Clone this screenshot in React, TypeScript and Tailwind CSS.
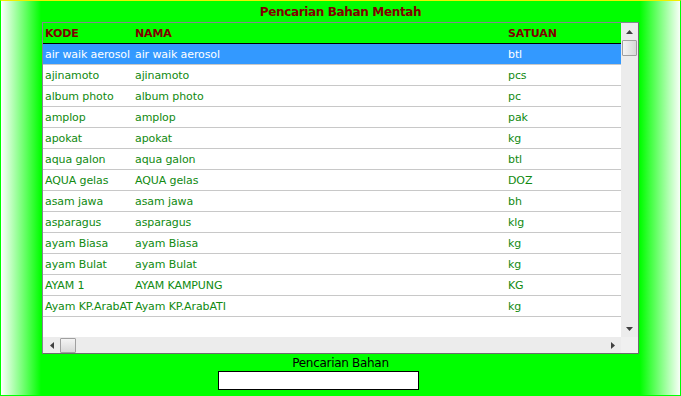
import React from "react";

const rows: [string, string, string][] = [
  ["air waik aerosol", "air waik aerosol", "btl"],
  ["ajinamoto", "ajinamoto", "pcs"],
  ["album photo", "album photo", "pc"],
  ["amplop", "amplop", "pak"],
  ["apokat", "apokat", "kg"],
  ["aqua galon", "aqua galon", "btl"],
  ["AQUA gelas", "AQUA gelas", "DOZ"],
  ["asam jawa", "asam jawa", "bh"],
  ["asparagus", "asparagus", "klg"],
  ["ayam Biasa", "ayam Biasa", "kg"],
  ["ayam Bulat", "ayam Bulat", "kg"],
  ["AYAM 1", "AYAM KAMPUNG", "KG"],
  ["Ayam KP.ArabATI", "Ayam KP.ArabATI", "kg"],
];

const font = { fontFamily: '"DejaVu Sans", Verdana, sans-serif' };

export default function App() {
  return (
    <div
      className="w-[681px] h-[396px] border-t border-[#f0f000] border-l border-r border-b border-l-[#00ff00] border-r-[#00ff00] border-b-[#00ff00] bg-[linear-gradient(to_right,#ffffff_0px,#00ff00_40px,#00ff00_639px,#ffffff_680px)] flex flex-col overflow-hidden"
      style={font}
    >
      <div className="h-[21px] flex items-center justify-center text-[12px] font-bold text-[#800000] leading-[20px] tracking-[-0.35px] pt-[1px]">
        Pencarian Bahan Mentah
      </div>
      <div className="pl-[41px]">
        <div className="w-[597px] h-[332px] border border-[#828790] border-r-[#6d6d6d] border-b-[#6d6d6d] bg-white flex flex-col">
          <div className="flex flex-1 min-h-0">
            <div className="flex-1 flex flex-col min-w-0">
              <div className="h-[21px] bg-[#00ff00] border-b border-black flex items-center text-[11px] font-bold text-[#800000] leading-[20px] tracking-[-0.1px] pt-[1px]">
                <div className="w-[90px] pl-[2px]">KODE</div>
                <div className="w-[373px] pl-[2px]">NAMA</div>
                <div className="flex-1 pl-[2px]">SATUAN</div>
              </div>
              {rows.map((r, i) => (
                <div
                  key={i}
                  className={`h-[21px] border-b border-[#c8c8c8] flex items-center text-[11px] leading-[20px] tracking-[-0.1px] whitespace-nowrap pt-[1px] ${
                    i === 0 ? "bg-[#3399ff] text-white" : "bg-white text-[#118a11]"
                  }`}
                >
                  <div className="w-[90px] pl-[2px] overflow-hidden">{r[0]}</div>
                  <div className="w-[373px] pl-[2px]">{r[1]}</div>
                  <div className="flex-1 pl-[2px]">{r[2]}</div>
                </div>
              ))}
            </div>
            <div className="w-[17px] bg-[#ececec] flex flex-col items-center">
              <div className="h-[17px] w-full flex items-center justify-center">
                <svg width="7" height="4" viewBox="0 0 7 4">
                  <path d="M3.5 0 L7 4 L0 4 Z" fill="#404040" />
                </svg>
              </div>
              <div className="w-[15px] h-[16px] border border-[#a0a0a0] rounded-[1px] bg-[linear-gradient(to_right,#f4f4f4,#d8d8d8)]" />
              <div className="flex-1" />
              <div className="h-[17px] w-full flex items-center justify-center">
                <svg width="7" height="4" viewBox="0 0 7 4">
                  <path d="M0 0 L7 0 L3.5 4 Z" fill="#404040" />
                </svg>
              </div>
            </div>
          </div>
          <div className="h-[16px] flex bg-[#ececec]">
            <div className="flex-1 flex items-center">
              <div className="w-[17px] h-full flex items-center justify-center">
                <svg width="4" height="7" viewBox="0 0 4 7">
                  <path d="M0 3.5 L4 0 L4 7 Z" fill="#404040" />
                </svg>
              </div>
              <div className="w-[16px] h-[15px] border border-[#a0a0a0] rounded-[1px] bg-[linear-gradient(to_bottom,#f4f4f4,#d8d8d8)]" />
              <div className="flex-1" />
              <div className="w-[17px] h-full flex items-center justify-center">
                <svg width="4" height="7" viewBox="0 0 4 7">
                  <path d="M0 0 L4 3.5 L0 7 Z" fill="#404040" />
                </svg>
              </div>
            </div>
            <div className="w-[17px] bg-[#f0f0f0]" />
          </div>
        </div>
      </div>
      <div className="flex flex-col">
        <div className="h-[16px] mt-[1px] text-[12px] text-black leading-[16px] tracking-[-0.3px] text-center">
          Pencarian Bahan
        </div>
        <div className="ml-[217px] w-[201px] h-[19px] border border-black bg-white" />
      </div>
    </div>
  );
}
